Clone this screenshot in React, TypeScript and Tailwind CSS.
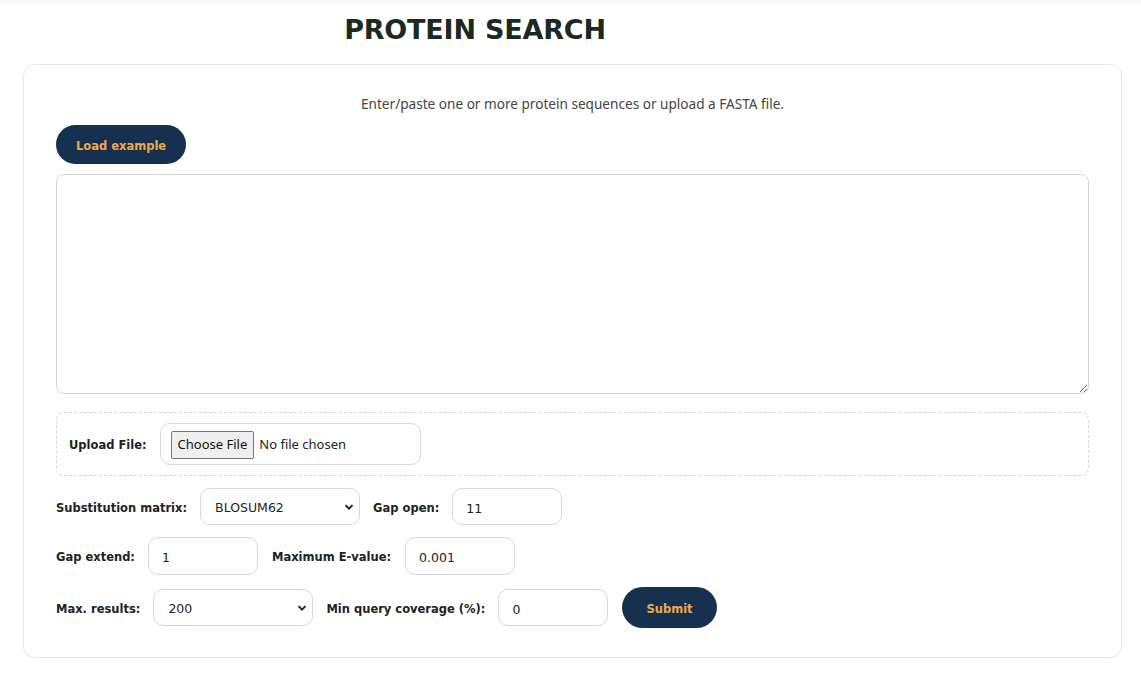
import { useState } from 'react';

const label = 'pt-[4px] text-[11.5px] font-bold text-[#222] whitespace-nowrap';
const field =
  'h-[37px] rounded-[10px] border border-[#d9d9d9] bg-white px-[13px] pt-[3px] text-[12.5px] text-[#222] outline-none';

function Chevron() {
  return (
    <svg
      className="pointer-events-none absolute right-[6px] top-1/2 -translate-y-1/2"
      width="10"
      height="10"
      viewBox="0 0 10 10"
    >
      <path d="M1.5 3.2 5 6.7 8.5 3.2" fill="none" stroke="#222" strokeWidth="1.9" />
    </svg>
  );
}

function Select({ value, options, width }: { value: string; options: string[]; width: string }) {
  const [v, setV] = useState(value);
  return (
    <div className={`relative ${width}`}>
      <select
        value={v}
        onChange={(e) => setV(e.target.value)}
        className={`${field} w-full appearance-none pl-[14px]`}
      >
        {options.map((o) => (
          <option key={o}>{o}</option>
        ))}
      </select>
      <Chevron />
    </div>
  );
}

export default function App() {
  const [seq, setSeq] = useState('');

  return (
    <div className="min-h-[682px] bg-white" style={{ fontFamily: '"DejaVu Sans", sans-serif' }}>
      <div className="h-[6px] bg-gradient-to-b from-[#f4f4f4] to-white" />
      {/* Title */}
      <h1 className="w-[950px] pt-[7px] text-center text-[27px] font-bold leading-[34px] tracking-[-0.2px] text-[#1b2922]">
        PROTEIN SEARCH
      </h1>

      {/* Card */}
      <div className="ml-[23px] mt-[17px] w-[1099px] rounded-[12px] border border-[#e3e8ef] bg-white px-[32px] pb-[29px] pt-[30px] shadow-[0_1px_3px_rgba(0,0,0,0.03)]">
        <p
          className="text-center text-[13.6px] leading-[18px] text-[#444]"
          style={{ fontFamily: '"Noto Sans", sans-serif' }}
        >
          Enter/paste one or more protein sequences or upload a FASTA file.
        </p>

        <button
          type="button"
          onClick={() => setSeq('>sp|P69905|HBA_HUMAN\nMVLSPADKTNVKAAWGKVGAHAGEYGAEALERMFLSFPTTKTYFPHF')}
          className="mt-[12px] h-[39px] rounded-full bg-[#15314f] px-[20px] pt-[4px] text-[11.5px] font-bold text-[#f0a94b]"
        >
          Load example
        </button>

        <textarea
          value={seq}
          onChange={(e) => setSeq(e.target.value)}
          className="mt-[10px] block h-[220px] w-full rounded-[8px] border border-[#d3d6db] p-[10px] text-[13px] outline-none"
        />

        {/* Upload */}
        <div className="mt-[18px] flex h-[64px] items-center gap-[13px] rounded-[8px] border border-dashed border-[#d6d6d6] pl-[12px]">
          <span className={label}>Upload File:</span>
          <div className="flex h-[42px] w-[261px] items-center rounded-[10px] border border-[#d9d9d9] px-[10px] pt-[2px]">
            <input
              type="file"
              className="text-[13px] text-[#222] file:mr-[5px] file:rounded-[2px] file:border file:border-[#767676] file:bg-[#efefef] file:px-[6px] file:py-[3px] file:text-[13px] file:text-[#111]"
              style={{ fontFamily: '"Noto Sans", sans-serif' }}
            />
          </div>
        </div>

        {/* Parameters */}
        <div className="mt-[12px] flex items-center gap-[13px]">
          <span className={label}>Substitution matrix:</span>
          <Select value="BLOSUM62" options={['BLOSUM62', 'BLOSUM45', 'BLOSUM80', 'PAM30', 'PAM70']} width="w-[160px]" />
          <span className={label}>Gap open:</span>
          <input defaultValue="11" className={`${field} w-[110px]`} />
        </div>

        <div className="mt-[12px] flex items-center gap-[13px]">
          <span className={label}>Gap extend:</span>
          <input defaultValue="1" className={`${field} h-[38px] w-[110px]`} />
          <span className={`${label} ml-[1px]`}>Maximum E-value:</span>
          <input defaultValue="0.001" className={`${field} ml-[1px] h-[38px] w-[110px]`} />
        </div>

        <div className="mt-[12px] flex items-center gap-[13px]">
          <span className={label}>Max. results:</span>
          <Select value="200" options={['50', '100', '200', '500', '1000']} width="w-[160px]" />
          <span className={label}>Min query coverage (%):</span>
          <input defaultValue="0" className={`${field} w-[110px]`} />
          <button
            type="button"
            className="ml-[1px] h-[41px] rounded-full bg-[#15314f] px-[24px] pt-[4px] text-[11.5px] font-bold text-[#f0a94b]"
          >
            Submit
          </button>
        </div>
      </div>
    </div>
  );
}
